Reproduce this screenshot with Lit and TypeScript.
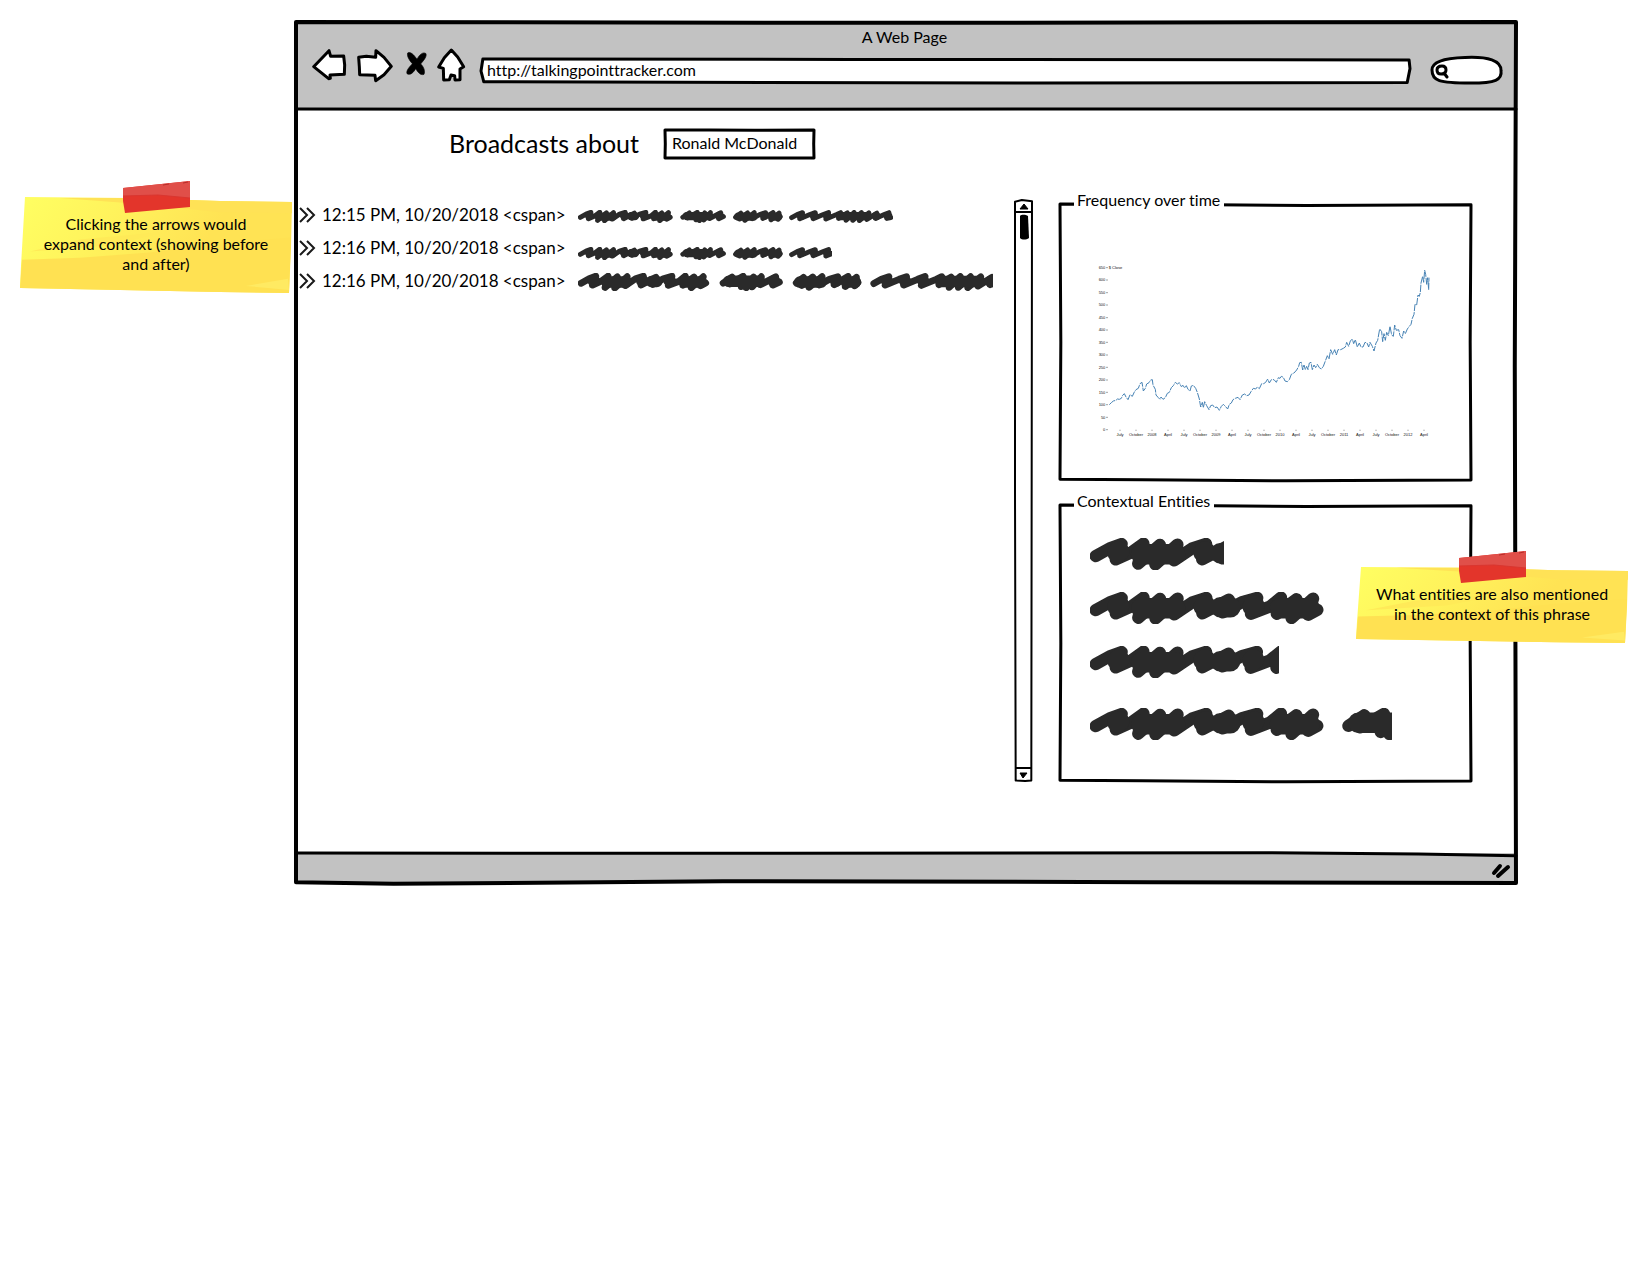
import { LitElement, html, svg, css } from "lit";
import { customElement, property } from "lit/decorators.js";

type Shape = "window" | "divider" | "footer" | "box" | "url" | "pill" | "rail";

const SHAPES: Record<Shape, string> = {
  window: "M0 0 L50 .1 L100 0 L99.9 40 L100 100 L70 99.9 L35 99.8 L8 100.1 L0 99.9 L0 50 Z",
  divider: "M0 0 L40 1 L70 0 L100 0",
  footer: "M0 0 L40 1 L80 -1 L92 3 L100 9",
  box: "M0 0 L30 .2 L60 .5 L100 .3 L99.8 50 L100 100 L55 100.3 L20 99.9 L0 99.7 L.2 50 Z",
  url: "M.2 0 L40 2 L99.9 4 L100 40 L99.7 98 L60 100 L.3 95 L0 50 Z",
  pill: "M0 50 C0 18 18 4 48 2 C82 -2 100 14 100 52 C102 88 92 100 56 100 C10 100 0 92 0 50 Z",
  rail: "M0 .3 L40 0 L100 .2 L98 50 L96 99.9 L60 100 L4 99.9 L0 50 Z",
};

/** A hand-drawn outline that stretches over its positioned parent. */
@customElement("sketch-frame")
class SketchFrame extends LitElement {
  @property() shape: Shape = "box";
  @property() fill = "none";
  @property({ type: Number }) weight = 3;
  static styles = css`
    :host { position: absolute; inset: 0; z-index: -1; pointer-events: none; }
    svg { display: block; width: 100%; height: 100%; overflow: visible; }
    path { vector-effect: non-scaling-stroke; }
  `;
  render() {
    return html`<svg viewBox="0 0 100 100" preserveAspectRatio="none" aria-hidden="true">
      <path d=${SHAPES[this.shape]} fill=${this.fill} stroke="#000" stroke-width=${this.weight} stroke-linejoin="round" stroke-linecap="round"></path>
    </svg>`;
  }
}

const SCRIBBLE =
  "M137 356L180 332L216 319L198 366L245 345L282 318L266 379L332 322L318 381L385 321L375 369L430 332L472 319L460 366L540 324L522 363L580 332L626 319L607 367L665 345L698 318L685 367L745 323L730 380L795 321L780 370L808 355" +
  "M902 355L950 323L938 360L1010 319L1000 374L1030 350L1026 380L1066 323L1058 376L1108 321L1102 364L1185 322L1170 366L1205 350" +
  "M1296 355L1335 325L1325 368L1385 323L1365 378L1435 321L1420 366L1475 335L1520 321L1500 364L1575 320L1560 374L1620 324L1612 370L1628 352" +
  "M1714 358L1755 335L1795 321L1775 366L1850 335L1890 321L1875 366L1950 335L1990 320L1970 368L2050 335L2080 321L2065 364L2130 323L2120 378L2180 320L2170 378L2235 321L2220 380L2290 322L2275 372L2350 325L2340 364L2405 335L2440 321L2425 364L2454 358";
const SCRIBBLE_CORE =
  "M203 345L208 342M275 350H378M464 345L469 342M515 347H545M612 345L617 342M695 350H785M932 346H1095M1172 345L1178 342M1315 350H1430M1508 345H1512M1565 350H1615M1783 345H1787M1880 345H1884M1978 345H1982M2075 347H2285M2342 346H2347M2430 345H2435";

/** Placeholder prose, cut off after a given length. */
@customElement("scribble-text")
class ScribbleText extends LitElement {
  @property({ type: Number }) length = 705;
  @property({ type: Number }) size = 32;
  static styles = css`
    :host { display: block; }
    svg { display: block; }
    path { fill: none; stroke: #2a2a2a; stroke-linejoin: round; stroke-linecap: round; }
  `;
  render() {
    const width = Math.round((this.length * this.size) / 97);
    return html`<svg width=${width} height=${this.size} viewBox="120 301 ${this.length} 97" preserveAspectRatio="xMinYMid slice" aria-hidden="true">
      <path d=${SCRIBBLE} stroke-width="37"></path>
      <path d=${SCRIBBLE_CORE} stroke-width="62"></path>
    </svg>`;
  }
}

@customElement("sticky-note")
class StickyNote extends LitElement {
  static styles = css`
    :host { display: block; position: relative; isolation: isolate; width: 272px; box-sizing: border-box;
      padding: 17px 13px 19px; text-align: center; font-size: 16px; line-height: 20px; }
    .paper { position: absolute; inset: 0; width: 100%; height: 100%; z-index: -1; }
    .tape { position: absolute; left: 103px; top: -16px; width: 67px; height: 32px; }
  `;
  render() {
    return html`
      <svg class="paper" viewBox="0 0 272 95" preserveAspectRatio="none" aria-hidden="true">
        <defs>
          <linearGradient id="sun" x1="0" y1="0" x2="1" y2=".25">
            <stop offset="0" stop-color="#ffff62"></stop>
            <stop offset=".35" stop-color="#fff35c"></stop>
            <stop offset=".75" stop-color="#ffe354"></stop>
          </linearGradient>
        </defs>
        <path d="M5 0L110 1L200 4L272 5L271 50L269 95L200 94L0 90L1 68Z" fill="url(#sun)"></path>
        <path d="M2 62L60 60L130 55L200 46L271 40L269 95L200 94L0 90Z" fill="#ffe152"></path>
        <path d="M40 1L110 1L200 4L272 5L272 16L200 15L120 7Z" fill="#ffe256"></path>
        <path d="M60 42L150 34L90 48L10 54Z" fill="#ffea58"></path>
        <path d="M226 88L268 81L269 92Z" fill="#ffea62"></path>
      </svg>
      <svg class="tape" viewBox="0 0 67 32" aria-hidden="true">
        <path d="M0 7L67 0L67 26L2 32L0 20Z" fill="#e3352b"></path>
        <path d="M0 7L67 0L67 17L35 14L0 15Z" fill="#e04f49"></path>
        <path d="M0 15L35 14L67 17" fill="none" stroke="#d93630"></path>
        <path d="M40 4L46 3M60 2L65 1" stroke="#b92b28"></path>
      </svg>
      <slot></slot>`;
  }
}

const CLOSE_TRACE =
  "M88 449L94 443L100 438L108 436L112 432L118 433L124 430L128 421L133 416L138 426L144 434L150 419L157 424L163 411L168 404L175 400L180 386L186 382L190 408L196 400L200 387L207 383L212 375L217 374L219 390L226 403L228 420L235 428L240 433L243 426L249 433L256 428L262 415L268 412L274 398L280 392L286 382L292 387L298 383L304 395L309 391L314 399L319 392L324 403L330 408L334 393L340 391L347 400L352 412L358 432L362 456L367 442L370 458L374 440L380 452L387 464L392 452L398 450L404 458L411 456L418 466L424 454L430 448L436 454L443 462L448 448L454 444L459 434L466 430L474 427L480 434L487 420L494 417L500 422L507 420L513 410L520 400L527 402L532 396L538 401L545 386L551 386L557 382L563 372L568 384L574 374L582 374L589 382L595 368L600 370L604 364L610 367L615 378L622 380L628 374L634 358L642 354L650 345L656 334L659 323L664 322L668 345L672 330L676 344L680 334L684 344L688 324L693 322L697 344L702 330L707 338L712 328L718 338L724 342L730 334L736 318L742 302L747 312L752 284L758 298L764 284L769 300L774 284L782 284L790 280L796 276L800 262L806 274L811 258L817 252L821 266L826 254L832 276L838 264L843 276L849 276L855 262L861 264L866 276L870 262L877 274L882 288L888 264L893 256L899 222L905 230L908 260L912 236L916 256L920 232L925 242L930 214L935 240L940 244L944 210L949 226L956 224L960 242L966 250L971 228L976 236L982 222L988 214L993 208L997 190L1002 178L1005 148L1010 150L1014 120L1018 124L1021 112L1023 84L1028 64L1031 82L1034 46L1037 58L1040 88L1043 68L1046 104L1047 68";
const Y_TICKS = Array.from({ length: 14 }, (_, i) => 650 - i * 50);
const X_TICKS = ["July", "October", "2008", "April", "July", "October", "2009", "April", "July", "October", "2010", "April", "July", "October", "2011", "April", "July", "October", "2012", "April"];

@customElement("frequency-chart")
class FrequencyChart extends LitElement {
  static styles = css`
    :host { display: block; }
    svg { display: block; width: 100%; }
    .label { font: 12px "Liberation Sans", Arial, sans-serif; fill: #111; }
    .end { text-anchor: end; }
    .mid { text-anchor: middle; }
    .tick { stroke: #777; stroke-width: 2; }
    .line { fill: none; stroke: #4682b4; stroke-width: 3; stroke-linejoin: round; stroke-dasharray: 22 3; }
  `;
  render() {
    return html`<svg viewBox="0 0 1110 570" role="img" aria-label="Frequency over time">
      ${Y_TICKS.map((v, i) => {
        const y = Math.round(38 + i * 37.4);
        return svg`<text class="label end" x="76" y=${y + 4}>${v}</text><path class="tick" d="M78 ${y}H84"></path>`;
      })}
      <text class="label" x="86" y="42">$ Close</text>
      ${X_TICKS.map((t, i) => {
        const x = 120 + i * 48;
        return svg`<path class="tick" d="M${x} 524V528"></path><text class="label mid" x=${x} y="542">${t}</text>`;
      })}
      <path class="line" d=${CLOSE_TRACE}></path>
    </svg>`;
  }
}

const BROADCASTS = [
  { time: "12:15 PM, 10/20/2018 <cspan>", length: 2351, size: 13, drop: "level" },
  { time: "12:16 PM, 10/20/2018 <cspan>", length: 1898, size: 13, drop: "low" },
  { time: "12:16 PM, 10/20/2018 <cspan>", length: 2236, size: 18, drop: "level" },
];

@customElement("app-root")
class AppRoot extends LitElement {
  static styles = css`
    :host { display: block; color: #000; font: 16px/20px Lato, "Open Sans", sans-serif; font-variant-ligatures: none; }
    .page { display: grid; grid-template-columns: 272px minmax(0, 1fr); column-gap: 4px; align-items: start; padding: 22px 134px 40px 20px; }
    .expand-note { margin-top: 175px; }
    .window, .url, .search, .topic, .bar, .status, .panel, .rail { position: relative; isolation: isolate; }
    .outline { z-index: 1; }
    .bar { background: #c2c2c2; height: 87px; box-sizing: border-box; padding: 5px 15px 0 12px; }
    .title { margin: 0; text-align: center; line-height: 20px; }
    .nav { display: flex; align-items: flex-end; gap: 4px; height: 36px; }
    button { appearance: none; border: 0; background: none; padding: 0; margin: 0; display: block; flex: none; cursor: pointer; }
    button svg, .grip { display: block; overflow: visible; }
    .ink { stroke: #000; stroke-width: 9; stroke-linejoin: round; fill: #fff; }
    input { appearance: none; border: 0; outline: 0; background: none; color: inherit; font: inherit; font-variant-ligatures: none; box-sizing: border-box; width: 100%; height: 100%; margin: 0; display: block; }
    .url { flex: 1; height: 24px; margin: 0 18px 0 13px; }
    .url input { padding: 0 6px 4px; }
    .search { width: 69px; height: 26px; display: flex; align-items: center; padding-left: 3px; box-sizing: border-box; }
    .search svg { flex: none; }
    .search input { min-width: 0; }
    .edge { position: absolute; left: 0; right: 0; height: 31px; z-index: 1; }
    .top-edge { bottom: -31px; }
    .foot-edge { top: 0; }
    .heading { display: flex; align-items: center; gap: 26px; padding: 21px 0 0 153px; }
    h1 { margin: 0; font-size: 25px; line-height: 26px; padding-bottom: 2px; font-weight: 400; white-space: nowrap; }
    .topic { width: 149px; height: 28px; }
    .topic input { padding: 0 7px 4px; }
    .body { display: grid; grid-template-columns: minmax(0, 1fr) 17px 439px; padding: 42px 45px 72px 3px; }
    .list { list-style: none; margin: -2px 0 0; padding: 0; }
    .row { display: grid; grid-template-columns: 16px 249px minmax(0, 1fr); column-gap: 7px; align-items: center; height: 33px; font-size: 17px; line-height: 20px; white-space: nowrap; }
    .level { padding-top: 3px; }
    .low { padding-top: 12px; }
    .rail { display: flex; flex-direction: column; justify-content: space-between; }
    .panels { display: grid; gap: 25px; margin: 4px 0 0 28px; align-content: start; }
    .panel { box-sizing: border-box; height: 276px; }
    .annotated { z-index: 2; }
    .legend { margin: -14px 0 0 14px; padding: 0 4px 0 3px; width: fit-content; background: #fff; font-size: 16px; line-height: 20px; font-weight: 400; }
    .chart { padding: 45px 21px 0 20px; }
    .entities { display: grid; gap: 22px; margin: 0; padding: 27px 0 0 30px; list-style: none; }
    .apart { padding-top: 8px; }
    .context-note { position: absolute; right: -157px; top: 62px; }
    .status { background: #c2c2c2; height: 30px; box-sizing: border-box; display: flex; justify-content: flex-end; align-items: center; padding: 5px 5px 0 0; }
  `;
  render() {
    return html`<div class="page">
      <sticky-note class="expand-note">Clicking the arrows would<br />expand context (showing before<br />and after)</sticky-note>
      <main class="window">
        <header class="bar">
          <p class="title">A Web Page</p>
          <nav class="nav">
            <button aria-label="Back"><svg width="42" height="36" viewBox="54 96 126 108"><path class="ink" d="M71 155L117 107L122 124L161 123L164 150L163 178L120 180L121 190L116 191Z"></path></svg></button>
            <button aria-label="Forward"><svg width="42" height="36" viewBox="191 96 126 108"><path class="ink" d="M205 127L228 124L256 127L257 107L281 127L303 154L281 179L256 197L254 181L208 179L207 155Z"></path></svg></button>
            <button aria-label="Stop"><svg width="34" height="36" viewBox="330 96 102 108"><path d="M353 114C362 109 372 120 381 133C389 117 400 110 408 116C411 127 397 140 392 147C401 155 406 168 402 178C391 182 384 171 377 161C370 173 361 182 351 176C348 165 360 155 367 146C359 137 350 124 353 114Z" fill="#000" stroke="#000" stroke-width="2"></path></svg></button>
            <button aria-label="Home"><svg width="26" height="36" viewBox="442 96 78 108"><path class="ink" d="M482 105L501 126L519 155L508 162L508 194L493 195L492 182L481 180L476 194L459 195L458 160L444 156L461 128Z"></path></svg></button>
            <div class="url"><sketch-frame shape="url" fill="#fff"></sketch-frame><input aria-label="Address" value="http://talkingpointtracker.com" /></div>
            <div class="search"><sketch-frame shape="pill" fill="#fff"></sketch-frame>
              <svg width="14" height="20" viewBox="0 0 14 20" aria-hidden="true"><path d="M7 6C10 6 11 8 11 10C11 13 9 14 6 14C3 14 2 12 2 10C2 7 4 6 7 6ZM9 13L12 17" fill="none" stroke="#000" stroke-width="3" stroke-linecap="round"></path></svg>
              <input type="search" aria-label="Search" /></div>
          </nav>
          <div class="edge top-edge"><sketch-frame shape="divider"></sketch-frame></div>
        </header>
        <div class="heading">
          <h1><label for="topic">Broadcasts about</label></h1>
          <div class="topic"><sketch-frame></sketch-frame><input id="topic" value="Ronald McDonald" /></div>
        </div>
        <div class="body">
          <ul class="list">
            ${BROADCASTS.map(
              (b) => html`<li class="row">
                <button aria-label="Expand context"><svg width="16" height="16" viewBox="0 0 16 16"><path d="M1 1L8 8L1 15M8 1L15 8L8 15" fill="none" stroke="#1a1a1a" stroke-width="2"></path></svg></button>
                <span>${b.time}</span>
                <scribble-text class=${b.drop} length=${b.length} size=${b.size}></scribble-text>
              </li>`,
            )}
          </ul>
          <div class="rail"><sketch-frame shape="rail" weight="2"></sketch-frame>
            <button aria-label="Scroll up"><svg width="17" height="42" viewBox="0 0 17 42"><path d="M0 12H17" stroke="#000" stroke-width="2"></path><path d="M9 4L13 9H5Z" stroke="#000" stroke-linejoin="round"></path><path d="M5 16C7 14 11 15 13 16L14 38C11 40 7 40 5 38Z"></path></svg></button>
            <button aria-label="Scroll down"><svg width="17" height="13" viewBox="0 0 17 13"><path d="M0 0H17" stroke="#000" stroke-width="2"></path><path d="M5 5H12L8 10Z" stroke="#000" stroke-linejoin="round"></path></svg></button>
          </div>
          <div class="panels">
            <section class="panel"><sketch-frame></sketch-frame>
              <h2 class="legend">Frequency over time</h2>
              <div class="chart"><frequency-chart></frequency-chart></div>
            </section>
            <section class="panel annotated"><sketch-frame></sketch-frame>
              <h2 class="legend">Contextual Entities</h2>
              <ul class="entities">
                <li><scribble-text length="407"></scribble-text></li>
                <li><scribble-text length="708"></scribble-text></li>
                <li><scribble-text length="574"></scribble-text></li>
                <li class="apart"><scribble-text length="914"></scribble-text></li>
              </ul>
              <sticky-note class="context-note">What entities are also mentioned<br />in the context of this phrase</sticky-note>
            </section>
          </div>
        </div>
        <footer class="status">
          <div class="edge foot-edge"><sketch-frame shape="footer"></sketch-frame></div>
          <svg class="grip" width="20" height="18" viewBox="0 0 20 18" aria-hidden="true"><path d="M3 11L9 4M7 14L17 5" stroke="#000" stroke-width="4" stroke-linecap="round"></path></svg>
        </footer>
        <sketch-frame class="outline" shape="window" weight="4"></sketch-frame>
      </main>
    </div>`;
  }
}
